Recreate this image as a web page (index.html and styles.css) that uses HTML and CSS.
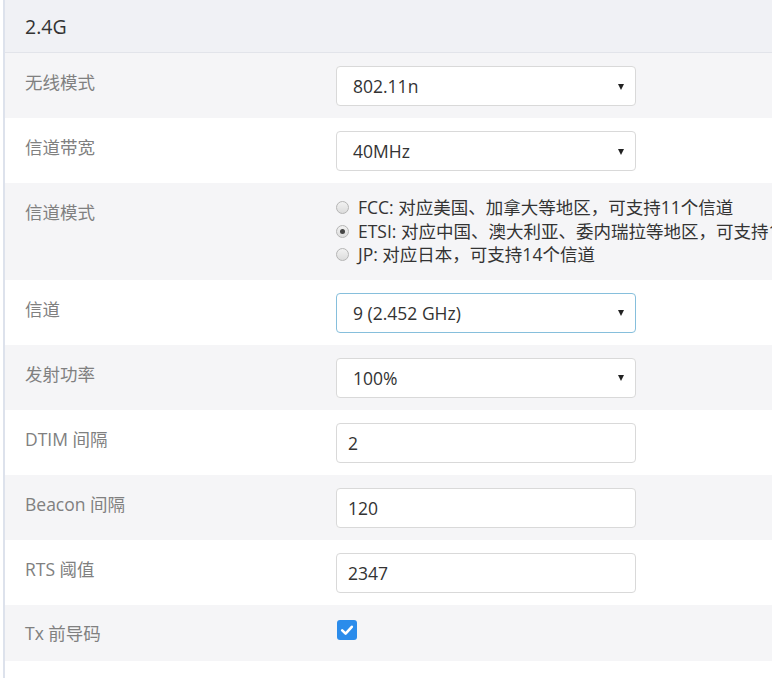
FILE: index.html
```html
<!DOCTYPE html>
<html lang="zh-CN">
<head>
<meta charset="utf-8">
<title>2.4G</title>
<link rel="stylesheet" href="styles.css">
</head>
<body>
<div class="panel">
  <div class="panel-head">2.4G</div>
  <div class="row alt">
    <div class="label">无线模式</div>
    <div class="ctrl"><div class="select"><span>802.11n</span><i class="caret"></i></div></div>
  </div>
  <div class="row">
    <div class="label">信道带宽</div>
    <div class="ctrl"><div class="select"><span>40MHz</span><i class="caret"></i></div></div>
  </div>
  <div class="row alt">
    <div class="label">信道模式</div>
    <div class="ctrl radios">
      <label class="radio"><span class="dot"></span>FCC: 对应美国、加拿大等地区，可支持11个信道</label>
      <label class="radio"><span class="dot on"></span>ETSI: 对应中国、澳大利亚、委内瑞拉等地区，可支持13个信道</label>
      <label class="radio"><span class="dot"></span>JP: 对应日本，可支持14个信道</label>
    </div>
  </div>
  <div class="row">
    <div class="label">信道</div>
    <div class="ctrl"><div class="select focus"><span>9 (2.452 GHz)</span><i class="caret"></i></div></div>
  </div>
  <div class="row alt">
    <div class="label">发射功率</div>
    <div class="ctrl"><div class="select"><span>100%</span><i class="caret"></i></div></div>
  </div>
  <div class="row">
    <div class="label">DTIM 间隔</div>
    <div class="ctrl"><div class="input">2</div></div>
  </div>
  <div class="row alt">
    <div class="label">Beacon 间隔</div>
    <div class="ctrl"><div class="input">120</div></div>
  </div>
  <div class="row">
    <div class="label">RTS 阈值</div>
    <div class="ctrl"><div class="input">2347</div></div>
  </div>
  <div class="row alt check-row">
    <div class="label">Tx 前导码</div>
    <div class="ctrl">
      <span class="checkbox"><svg viewBox="0 0 20 20" width="20" height="20"><path d="M5.2 10.4 L8.6 13.6 L14.8 6.8" fill="none" stroke="#fff" stroke-width="2.6" stroke-linecap="round" stroke-linejoin="round"/></svg></span>
    </div>
  </div>
</div>
</body>
</html>
```
FILE: styles.css
```css
html, body {
  margin: 0;
  padding: 0;
  background: #ffffff;
  overflow: hidden;
}
body {
  font-family: "Open Sans", "Noto Sans CJK SC", sans-serif;
  font-size: 17.5px;
  color: #333;
  width: 772px;
  height: 678px;
}
.panel {
  margin-left: 3px;
  border-left: 2px solid #dde2ec;
  height: 678px;
  overflow: hidden;
}
.panel-head {
  height: 52px;
  line-height: 53px;
  padding-left: 20px;
  font-size: 19.5px;
  color: #333;
  background: #f0f1f5;
  border-bottom: 1px solid #e2e4ea;
}
.row {
  display: flex;
  align-items: flex-start;
  padding: 13px 0 12px;
  background: #ffffff;
  white-space: nowrap;
}
.row.alt {
  background: #f5f5f7;
}
.label {
  width: 331px;
  flex: none;
  padding-left: 20px;
  box-sizing: border-box;
  line-height: 32px;
  color: #808080;
}
.ctrl {
  flex: none;
}
.select, .input {
  box-sizing: border-box;
  width: 300px;
  height: 40px;
  border: 1px solid #d9d9d9;
  border-radius: 4px;
  background: #fff;
  display: flex;
  align-items: center;
  color: #333;
}
.select {
  padding: 0 11px 0 16px;
  justify-content: space-between;
}
.select.focus {
  border-color: #86bfdc;
}
.input {
  padding-left: 11px;
}
.caret {
  width: 0;
  height: 0;
  border-left: 3.5px solid transparent;
  border-right: 3.5px solid transparent;
  border-top: 6px solid #222;
  margin-top: 1px;
}
.radios {
  display: flex;
  flex-direction: column;
  padding-top: 0;
  margin-bottom: 1px;
}
.radio {
  display: flex;
  align-items: center;
  line-height: 23.5px;
  height: 23.5px;
  color: #333;
}
.dot {
  width: 11px;
  height: 11px;
  border-radius: 50%;
  border: 1px solid #b5b5b5;
  background: linear-gradient(#f2f2f2, #dcdcdc);
  margin-right: 9px;
  position: relative;
  flex: none;
}
.dot.on::after {
  content: "";
  position: absolute;
  left: 3px;
  top: 3px;
  width: 5px;
  height: 5px;
  border-radius: 50%;
  background: #444;
}
.check-row {
  padding: 12px 0 12px;
}
.checkbox {
  display: block;
  width: 20px;
  height: 20px;
  margin-top: 3px;
  margin-left: 1px;
  border-radius: 3px;
  background: #2b8ceb;
}
.checkbox svg {
  display: block;
}
```
